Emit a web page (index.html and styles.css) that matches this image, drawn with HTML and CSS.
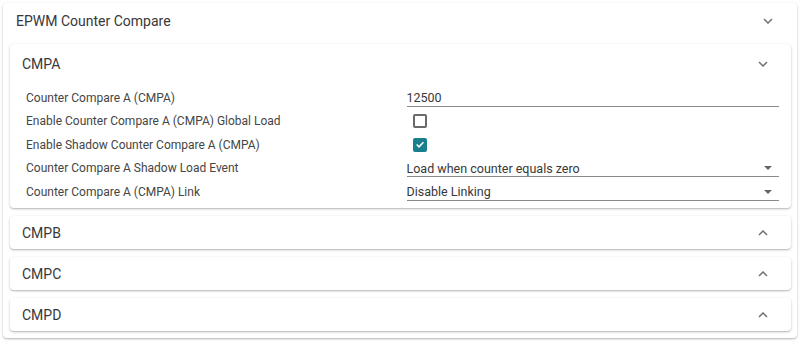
FILE: index.html
```html
<!DOCTYPE html>
<html>
<head>
    <meta charset="utf-8" />
    <title>EPWM Counter Compare</title>
    <link rel="stylesheet" href="styles.css">
</head>
<body>
    <div class="panel">
        <div class="panelHead">
            <span>EPWM Counter Compare</span>
            <svg class="chevron" width="10" height="6" viewBox="0 0 10 6"><path d="M1 1 L5 5 L9 1" /></svg>
        </div>
        <div class="panelBody">
            <div class="card">
                <div class="cardHead open">
                    <span>CMPA</span>
                    <svg class="chevron" width="10" height="6" viewBox="0 0 10 6"><path d="M1 1 L5 5 L9 1" /></svg>
                </div>
                <div class="cardBody">
                    <div class="row">
                        <label>Counter Compare A (CMPA)</label>
                        <div class="field">12500</div>
                    </div>
                    <div class="row">
                        <label>Enable Counter Compare A (CMPA) Global Load</label>
                        <div><span class="check"></span></div>
                    </div>
                    <div class="row">
                        <label>Enable Shadow Counter Compare A (CMPA)</label>
                        <div>
                            <span class="check checked">
                                <svg width="11" height="11" viewBox="0 0 11 11"><path d="M1.8 5.6 L4.4 8.1 L9.3 3" /></svg>
                            </span>
                        </div>
                    </div>
                    <div class="row">
                        <label>Counter Compare A Shadow Load Event</label>
                        <div class="field select">Load when counter equals zero<span class="arrow"></span></div>
                    </div>
                    <div class="row">
                        <label>Counter Compare A (CMPA) Link</label>
                        <div class="field select">Disable Linking<span class="arrow"></span></div>
                    </div>
                </div>
            </div>
            <div class="card">
                <div class="cardHead">
                    <span>CMPB</span>
                    <svg class="chevron" width="10" height="6" viewBox="0 0 10 6"><path d="M1 5 L5 1 L9 5" /></svg>
                </div>
            </div>
            <div class="card">
                <div class="cardHead">
                    <span>CMPC</span>
                    <svg class="chevron" width="10" height="6" viewBox="0 0 10 6"><path d="M1 5 L5 1 L9 5" /></svg>
                </div>
            </div>
            <div class="card">
                <div class="cardHead">
                    <span>CMPD</span>
                    <svg class="chevron" width="10" height="6" viewBox="0 0 10 6"><path d="M1 5 L5 1 L9 5" /></svg>
                </div>
            </div>
        </div>
    </div>
</body>
</html>
```

FILE: styles.css
```css
* {
    box-sizing: border-box;
}

body {
    margin: 0;
    padding: 3px;
    background-color: #fff;
    font-family: Roboto, "Liberation Sans", sans-serif;
    color: #383838;
}

.panel {
    border-radius: 4px;
    background-color: #fff;
    box-shadow: 0 1px 3px rgba(0, 0, 0, 0.2), 0 1px 1px rgba(0, 0, 0, 0.12);
}

.panelHead {
    display: flex;
    align-items: center;
    justify-content: space-between;
    height: 35px;
    padding: 1px 24px 0 13px;
    font-size: 14px;
}

.panelBody {
    display: flex;
    flex-direction: column;
    gap: 8px;
    padding: 6px 6px 7px 7px;
}

.card {
    border-radius: 4px;
    background-color: #fff;
    box-shadow: 0 1px 3px rgba(0, 0, 0, 0.2), 0 1px 1px rgba(0, 0, 0, 0.12);
}

.cardHead {
    display: flex;
    align-items: center;
    justify-content: space-between;
    height: 33px;
    padding: 2px 23px 0 12px;
    font-size: 14px;
}

    .cardHead.open {
        height: 37px;
        padding-top: 3px;
    }

.chevron {
    display: block;
}

    .chevron path {
        fill: none;
        stroke: #707070;
        stroke-width: 1.5;
    }

.cardBody {
    padding: 5px 12px 4px 16px;
}

.row {
    display: grid;
    grid-template-columns: 1fr 1fr;
    column-gap: 8px;
    align-items: center;
    height: 23.5px;
    font-size: 12px;
}

    .row label {
        color: #454545;
    }

.field {
    display: flex;
    align-items: center;
    justify-content: space-between;
    height: 17px;
    margin-top: 1px;
    border-bottom: 1px solid #8a8a8a;
    font-size: 12.5px;
    color: #383838;
}

.arrow {
    width: 0;
    height: 0;
    margin-right: 7px;
    border-left: 4px solid transparent;
    border-right: 4px solid transparent;
    border-top: 4px solid #666;
}

.check {
    display: flex;
    align-items: center;
    justify-content: center;
    width: 14px;
    height: 14px;
    margin-left: 6px;
    border: 2px solid #6a6a6a;
    border-radius: 2px;
}

    .check.checked {
        border-color: #1a7f8c;
        background-color: #1a7f8c;
    }

    .check svg path {
        fill: none;
        stroke: #fff;
        stroke-width: 1.6;
    }
```
